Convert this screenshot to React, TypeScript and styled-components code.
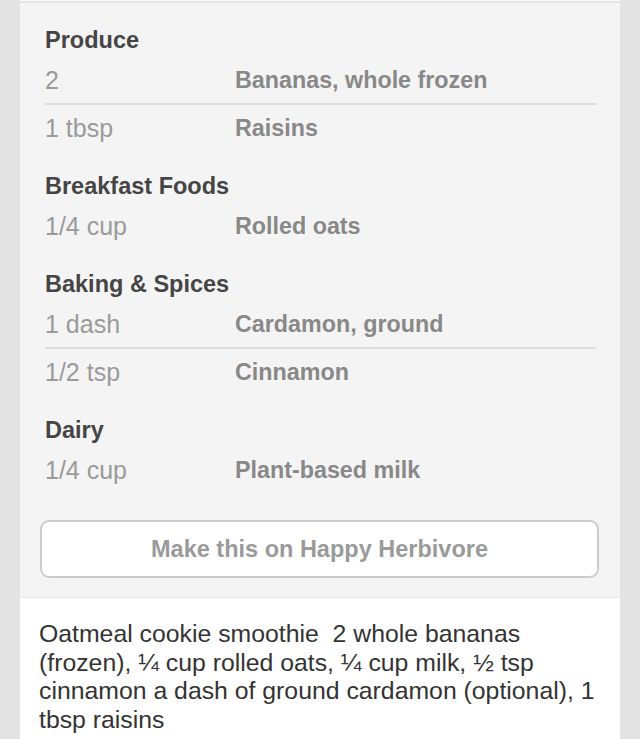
import styled, { createGlobalStyle } from "styled-components";

type Ingredient = {
  qty: string;
  name: string;
};

type Group = {
  title: string;
  items: Ingredient[];
};

const groups: Group[] = [
  {
    title: "Produce",
    items: [
      { qty: "2", name: "Bananas, whole frozen" },
      { qty: "1 tbsp", name: "Raisins" },
    ],
  },
  {
    title: "Breakfast Foods",
    items: [{ qty: "1/4 cup", name: "Rolled oats" }],
  },
  {
    title: "Baking & Spices",
    items: [
      { qty: "1 dash", name: "Cardamon, ground" },
      { qty: "1/2 tsp", name: "Cinnamon" },
    ],
  },
  {
    title: "Dairy",
    items: [{ qty: "1/4 cup", name: "Plant-based milk" }],
  },
];

const App = () => {
  return (
    <>
      <GlobalStyle />
      <Page>
        <Card>
          <Ingredients>
            <Groups>
              {groups.map((group) => (
                <Section key={group.title}>
                  <SectionTitle>{group.title}</SectionTitle>
                  {group.items.map((item) => (
                    <Row key={item.name}>
                      <Qty>{item.qty}</Qty>
                      <Name>{item.name}</Name>
                    </Row>
                  ))}
                </Section>
              ))}
            </Groups>
            <MakeButton>Make this on Happy Herbivore</MakeButton>
          </Ingredients>
          <Description>
            Oatmeal cookie smoothie&nbsp; 2 whole bananas (frozen), ¼ cup rolled
            oats, ¼ cup milk, ½ tsp cinnamon a dash of ground cardamon
            (optional), 1 tbsp raisins
          </Description>
        </Card>
      </Page>
    </>
  );
};

const GlobalStyle = createGlobalStyle`
  html, body {
    margin: 0;
    padding: 0;
    background: #e3e3e3;
  }
  body {
    font-family: "Liberation Sans", Arial, sans-serif;
  }
`;

const Page = styled.div`
  padding: 0 20px;
  min-height: 739px;
  background: #e3e3e3;
`;

const Card = styled.div`
  background: #f4f4f4;
  border-top: 1px solid #fbfbfb;
`;

const Ingredients = styled.div`
  border-top: 2px solid #e6e6e6;
  padding: 22px 0 19px;
  border-bottom: 1px solid #e6e6e6;
`;

const Groups = styled.div`
  display: flex;
  flex-direction: column;
  gap: 20px;
  margin-bottom: 27px;
`;

const Section = styled.div`
  padding: 0 24px 0 25px;
`;

const SectionTitle = styled.div`
  color: #454545;
  font-size: 23.5px;
  font-weight: 700;
  line-height: 30px;
  margin-bottom: 2px;
`;

const Row = styled.div`
  display: flex;
  align-items: center;
  height: 46px;

  & + & {
    border-top: 2px solid #dcdcdc;
  }
`;

const Qty = styled.span`
  width: 190px;
  flex-shrink: 0;
  color: #9a9a9a;
  font-size: 25px;
  line-height: 24px;
`;

const Name = styled.span`
  color: #888;
  font-size: 23.3px;
  font-weight: 700;
  line-height: 24px;
`;

const MakeButton = styled.div`
  box-sizing: border-box;
  margin: 0 21px 0 20px;
  height: 58px;
  display: flex;
  align-items: center;
  justify-content: center;
  background: #fff;
  border: 2px solid #cccccc;
  border-radius: 9px;
  color: #9a9a9a;
  font-size: 23.5px;
  font-weight: 700;
`;

const Description = styled.div`
  background: #fff;
  padding: 22px 18px 0 19px;
  color: #333;
  font-size: 24.8px;
  line-height: 28.5px;
  min-height: 140px;
`;

export default App;
